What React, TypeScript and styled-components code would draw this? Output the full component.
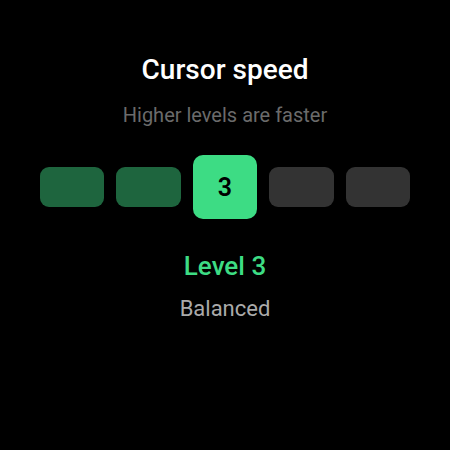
import React from 'react';
import styled, { createGlobalStyle } from 'styled-components';

const GlobalStyle = createGlobalStyle`
  html, body {
    margin: 0;
    padding: 0;
    background: #000;
  }
  body {
    font-family: Roboto, "Noto Sans", "Liberation Sans", sans-serif;
  }
`;

const Screen = styled.div`
  width: 450px;
  height: 450px;
  background: #000;
  display: flex;
  flex-direction: column;
  align-items: center;
  padding-top: 53px;
  box-sizing: border-box;
`;

const Title = styled.div`
  font-size: 28px;
  line-height: 33px;
  font-weight: 500;
  color: #fff;
`;

const Subtitle = styled.div`
  margin-top: 17px;
  font-size: 20px;
  line-height: 24px;
  color: #6b6b6b;
`;

const LevelRow = styled.div`
  margin-top: 28px;
  width: 370px;
  height: 64px;
  display: flex;
  align-items: center;
  gap: 12px;
`;

type Tone = 'filled' | 'active' | 'empty';

const LevelBox = styled.div<{ $tone: Tone }>`
  flex: 1;
  height: ${p => (p.$tone === 'active' ? '64px' : '40px')};
  border-radius: ${p => (p.$tone === 'active' ? '10px' : '9px')};
  background: ${p =>
    p.$tone === 'active' ? '#3ddc84' : p.$tone === 'filled' ? '#1e653e' : '#333333'};
  display: flex;
  align-items: center;
  justify-content: center;
  font-size: 25px;
  font-weight: 600;
  color: #000;
`;

const LevelLabel = styled.div`
  margin-top: 32px;
  font-size: 26px;
  line-height: 30px;
  font-weight: 500;
  color: #3ddc84;
`;

const Description = styled.div`
  margin-top: 15px;
  font-size: 22px;
  line-height: 26px;
  color: #aaaaaa;
`;

const current = 3;
const levels = [1, 2, 3, 4, 5];

export default function App() {
  return (
    <>
      <GlobalStyle />
      <Screen>
        <Title>Cursor speed</Title>
        <Subtitle>Higher levels are faster</Subtitle>
        <LevelRow>
          {levels.map(l => (
            <LevelBox
              key={l}
              $tone={l === current ? 'active' : l < current ? 'filled' : 'empty'}
            >
              {l === current ? l : null}
            </LevelBox>
          ))}
        </LevelRow>
        <LevelLabel>Level {current}</LevelLabel>
        <Description>Balanced</Description>
      </Screen>
    </>
  );
}
